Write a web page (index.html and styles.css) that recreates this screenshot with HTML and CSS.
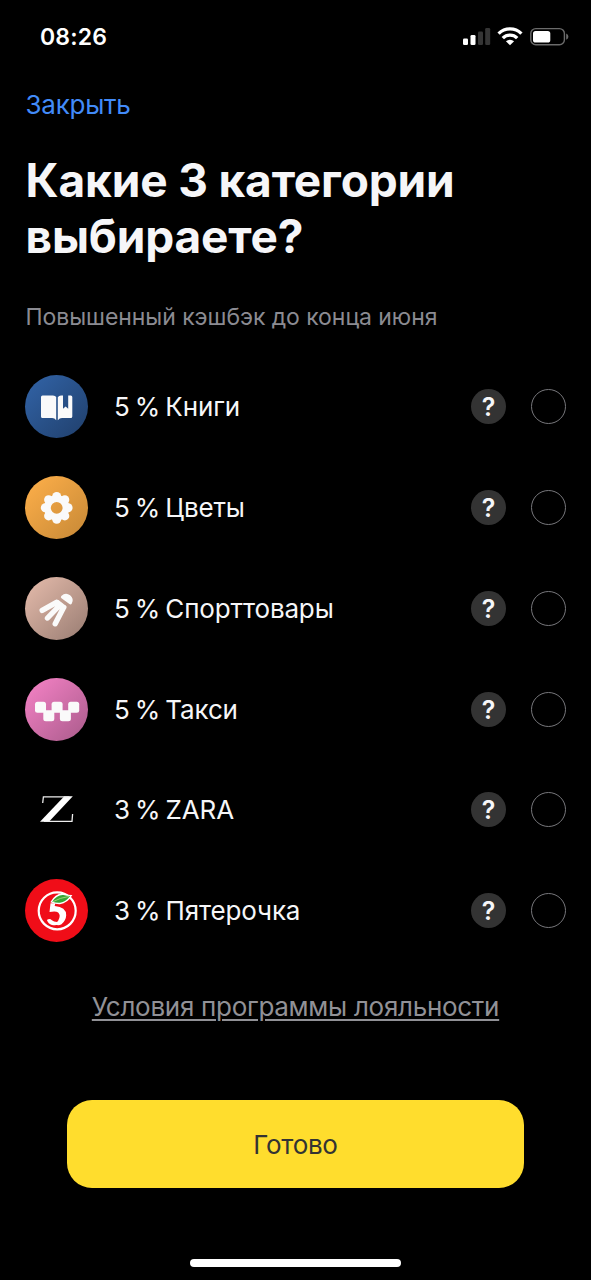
FILE: index.html
```html
<!DOCTYPE html>
<html lang="ru">
<head>
<meta charset="utf-8">
<title>Категории кэшбэка</title>
<link rel="stylesheet" href="styles.css">
</head>
<body>
<div class="screen">
  <header class="status">
    <span class="time">08:26</span>
    <svg class="status-icons" width="108" height="22" viewBox="0 0 108 22">
      <g fill="#fff">
        <rect x="1" y="12.5" width="5" height="6.5" rx="1.3"/>
        <rect x="8.5" y="9" width="5" height="10" rx="1.3"/>
        <rect x="16" y="5.5" width="5" height="13.5" rx="1.3" fill="#353535"/>
        <rect x="23.2" y="2" width="5" height="17" rx="1.3" fill="#353535"/>
      </g>
      <g fill="none" stroke="#fff" stroke-width="3.4">
        <path d="M36.6 7.6a16.2 16.2 0 0 1 22.8 0"/>
        <path d="M40.8 12.1a10.2 10.2 0 0 1 14.4 0"/>
      </g>
      <path d="M43.9 15.3a6 6 0 0 1 8.2 0L48 19.3z" fill="#fff"/>
      <rect x="68.8" y="2.6" width="33.6" height="16.2" rx="5" fill="none" stroke="#6b6b6b" stroke-width="1.4"/>
      <rect x="71" y="5" width="17.3" height="11.5" rx="2.6" fill="#fff"/>
      <path d="M104.2 7.6q2.2 1 2.2 3.1t-2.2 3.1z" fill="#6b6b6b"/>
    </svg>
  </header>
  <nav class="nav"><a class="close">Закрыть</a></nav>
  <h1 class="title">Какие 3 категории<br>выбираете?</h1>
  <p class="subtitle">Повышенный кэшбэк до конца июня</p>
  <ul class="list">
    <li class="row">
      <span class="icon books"><svg viewBox="0 0 63 63" fill="#fafafa"><path d="M17.5 20.5H28q2.3 0 3.2 1.5v23.2q-1.6-2.1-4-2.1h-9.700q-1.500 0-1.500-1.500V22q0-1.500 1.500-1.500z"/><path d="M36 20.500h2v13.300l2.600-2.200 2.600 2.200V20.500h2.600q1.500 0 1.500 1.500v19.600q0 1.500-1.500 1.500H37q-2.400 0-4.200 2.100V22.200q1-1.700 3.200-1.700z"/></svg></span>
      <span class="name">5 % Книги</span><button class="help">?</button><span class="radio"></span>
    </li>
    <li class="row">
      <span class="icon flowers"><svg viewBox="0 0 63 63" fill="#fafafa"><circle cx="31.700" cy="31.800" r="9.300" fill="none" stroke="#fafafa" stroke-width="6.800"/><circle cx="31.700" cy="20.400" r="4.500"/><circle cx="39.800" cy="23.700" r="4.500"/><circle cx="43.100" cy="31.800" r="4.500"/><circle cx="39.800" cy="39.900" r="4.500"/><circle cx="31.700" cy="43.200" r="4.500"/><circle cx="23.600" cy="39.900" r="4.500"/><circle cx="20.300" cy="31.800" r="4.500"/><circle cx="23.600" cy="23.700" r="4.500"/></svg></span>
      <span class="name">5 % Цветы</span><button class="help">?</button><span class="radio"></span>
    </li>
    <li class="row">
      <span class="icon sport"><svg viewBox="0 0 63 63"><g stroke="#fafafa" stroke-width="5.400" stroke-linecap="round"><path d="M17.200 33.400 31.500 25.400M22.500 41 35 28M30.200 46.800l8.400-16.300"/></g><path d="M31.200 22.800 33.500 23l7.900 6.300-.3 2.500-5-2.500z" fill="#fafafa"/><path d="M36.300 18.900q4.300-3.900 8.800-.6 4.400 3.800 1.600 8.400-.9 1.300-2.300.3l-7.900-5.800q-1.300-1-.2-2.300z" fill="#fafafa"/></svg></span>
      <span class="name">5 % Спорттовары</span><button class="help">?</button><span class="radio"></span>
    </li>
    <li class="row">
      <span class="icon taxi"><svg viewBox="0 0 63 63" fill="#fafafa"><rect x="10" y="23.700" width="11" height="11" rx="2.500"/><rect x="26.600" y="23.700" width="11" height="11" rx="2.500"/><rect x="43.200" y="23.700" width="11" height="11" rx="2.500"/><rect x="18.300" y="32.300" width="11" height="11" rx="2.500"/><rect x="34.900" y="32.300" width="11" height="11" rx="2.500"/></svg></span>
      <span class="name">5 % Такси</span><button class="help">?</button><span class="radio"></span>
    </li>
    <li class="row">
      <span class="icon"><svg viewBox="0 0 63 63"><path d="M39.300 18.300h8.500L23.900 43.700h-8.900z" fill="#fff"/><path d="M17.700 25l.7-6.200h26M19 43.400h28l.6-7.400" fill="none" stroke="#eee" stroke-width="1.300"/></svg></span>
      <span class="name">3 % ZARA</span><button class="help">?</button><span class="radio"></span>
    </li>
    <li class="row">
      <span class="icon pyat"><svg viewBox="0 0 63 63"><circle cx="32.200" cy="31.800" r="18.500" fill="none" stroke="#fff" stroke-width="2.200"/><path d="M25.500 24.300h4.700l-.5 2.700q11.500.8 11.500 9.300-.2 5.200-4.700 9-3.500 1.800-7.500-.2 5.500-2.500 5.700-8.300-.5-6-10.200-3.700z" fill="#fff"/><path d="M21.900 41q2.800-2.300 5 .3 1.800 1.800 5.200 1.800l3 1.500q-3 2.300-8.200 1.300-3.600-.8-5-4.900z" fill="#fff"/><path d="M25.300 23.300q5-9.700 13.600-8.800 4.600 1.700 8.500 1.500-4.800 8.400-12.500 9.200-4 .2-9.600-1.900z" fill="#fff"/><path d="M27.200 22.800q5-7.300 11.200-6.700 3.700.9 6.700 1-4.500 6.100-10 6.700-4 .3-7.900-1z" fill="#36a536"/><path d="M28 22.700q7-4 16-5.300" fill="none" stroke="#b7df86" stroke-width=".8"/></svg></span>
      <span class="name">3 % Пятерочка</span><button class="help">?</button><span class="radio"></span>
    </li>
  </ul>
  <div class="terms"><a class="terms-link">Условия программы лояльности</a></div>
  <button class="done">Готово</button>
  <div class="home"></div>
</div>
</body>
</html>
```
FILE: styles.css
```css
* { box-sizing: border-box; margin: 0; padding: 0; }
body { background: #000; color: #f6f6f8; font-family: Inter, "Noto Sans", sans-serif; }
button { border: 0; font-family: inherit; }
.screen { width: 591px; height: 1280px; display: flex; flex-direction: column; overflow: hidden; }
.status { height: 73px; padding: 0 21px 0 40px; display: flex; align-items: center; justify-content: space-between; }
.time { font-size: 23px; font-weight: 600; letter-spacing: 0.15px; color: #fff; }
.status-icons { display: block; }
.nav { height: 62px; padding: 0 25.5px; display: flex; align-items: center; }
.close { font-size: 26px; letter-spacing: -0.25px; color: #428bf9; }
.title { margin-top: 17px; padding: 0 25.5px; font-size: 46px; line-height: 56px; font-weight: 700; letter-spacing: -0.15px; white-space: nowrap; }
.subtitle { margin-top: 38px; padding: 0 25.5px; height: 30px; font-size: 23px; line-height: 30px; letter-spacing: -0.06px; color: #8b8b92; white-space: nowrap; }
.list { list-style: none; margin-top: 24.2px; }
.row { height: 100.85px; padding: 0 25px; display: flex; align-items: center; }
.icon { width: 63px; height: 63px; border-radius: 50%; overflow: hidden; }
.icon svg { display: block; width: 63px; height: 63px; }
.books { background: linear-gradient(135deg, #3264a8, #203f6b); }
.flowers { background: linear-gradient(135deg, #ffb04a, #c68836); }
.sport { background: linear-gradient(135deg, #e6bcac, #987c72); }
.taxi { background: linear-gradient(135deg, #f783c7, #a95b8b); }
.pyat { background: #f00d18; }
.name { flex: 1; margin-left: 26px; font-size: 26px; letter-spacing: -0.15px; word-spacing: -2px; white-space: nowrap; }
.help { width: 35px; height: 35px; border-radius: 50%; background: #333; color: #f6f6f8; font-size: 25px; font-weight: 600; line-height: 35px; padding-top: 1px; text-align: center; }
.radio { width: 35px; height: 35px; margin-left: 25px; border: 1.4px solid #77777b; border-radius: 50%; }
.terms { height: 84px; margin-top: 3.5px; display: flex; justify-content: center; align-items: center; }
.terms-link { font-size: 26px; letter-spacing: -0.29px; color: #919196; text-decoration: underline; text-decoration-thickness: 1.5px; text-underline-offset: 3px; white-space: nowrap; }
.done { width: 457px; height: 88px; margin: 51px 0 0 67px; border-radius: 25px; background: #ffdd2d; color: #333; font-size: 26px; letter-spacing: -0.3px; padding-top: 1px; }
.home { width: 211px; height: 8px; margin: 71px auto 0; border-radius: 4px; background: #fff; }
```
